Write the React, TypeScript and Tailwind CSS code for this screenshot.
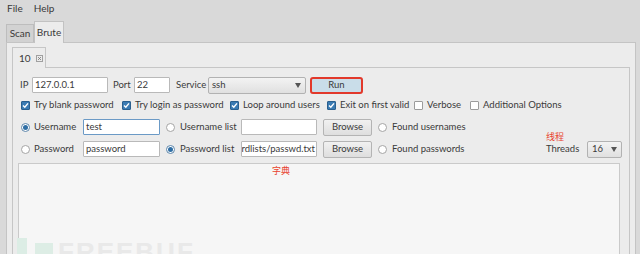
import React from "react";

const font = "font-['Lato',sans-serif]";

function Check({ on }: { on: boolean }) {
  return on ? (
    <span className="flex h-[9px] w-[9px] shrink-0 items-center justify-center rounded-[1px] border border-[#2a5f8e] bg-[#3b7bb3]">
      <svg width="7" height="7" viewBox="0 0 7 7">
        <path d="M1 3.6 L2.8 5.3 L6 1.4" fill="none" stroke="#ffffff" strokeWidth="1.4" />
      </svg>
    </span>
  ) : (
    <span className="h-[9px] w-[9px] shrink-0 rounded-[1px] border border-[#9c9c9c] bg-white" />
  );
}

function Radio({ on }: { on: boolean }) {
  return on ? (
    <span className="flex h-[9px] w-[9px] shrink-0 items-center justify-center rounded-full border border-[#5d86ab] bg-white">
      <span className="h-[5px] w-[5px] rounded-full bg-[#2f6ea4]" />
    </span>
  ) : (
    <span className="h-[9px] w-[9px] shrink-0 rounded-full border border-[#a5a5a5] bg-white" />
  );
}

function Arrow() {
  return (
    <svg width="6" height="5" viewBox="0 0 6 5">
      <path d="M0 0 L6 0 L3 5 Z" fill="#555555" />
    </svg>
  );
}

function Field({ w, text, focus }: { w: string; text: string; focus?: boolean }) {
  return (
    <div
      className={`flex h-[16px] shrink-0 items-center overflow-hidden whitespace-nowrap rounded-[1px] border bg-white pl-[2px] ${w} ${
        focus ? "border-[#6b9ac6]" : "border-[#b9b9b9]"
      }`}
    >
      {text}
    </div>
  );
}

function Browse() {
  return (
    <div className="flex h-[17px] w-[49px] items-center justify-center rounded-[2px] border border-[#b4b4b4] bg-gradient-to-b from-[#f1f1f1] to-[#dedede]">
      Browse
    </div>
  );
}

const boxes: { label: string; on: boolean; w: string }[] = [
  { label: "Try blank password", on: true, w: "w-[101px]" },
  { label: "Try login as password", on: true, w: "w-[108px]" },
  { label: "Loop around users", on: true, w: "w-[97px]" },
  { label: "Exit on first valid", on: true, w: "w-[87px]" },
  { label: "Verbose", on: false, w: "w-[56px]" },
  { label: "Additional Options", on: false, w: "" },
];

export default function App() {
  return (
    <div className={`relative h-[254px] w-[640px] overflow-hidden whitespace-nowrap bg-[#d9d9d9] text-[9.5px] text-[#3a3a3a] ${font}`}>
      {/* menu */}
      <div className="flex h-[16px] items-center gap-[11px] pl-[7px] text-[10px]">
        <span>File</span>
        <span>Help</span>
      </div>

      {/* top tabs */}
      <div className="flex h-[26px] items-end pl-[6px] text-[10px]">
        <div className="flex h-[18px] w-[28px] items-center justify-center border border-b-0 border-[#bdbdbd] bg-[#d2d2d2]">
          Scan
        </div>
        <div className="-mb-px flex h-[22px] w-[30px] items-center justify-center border border-b-0 border-[#c2c2c2] bg-[#ececec]">
          Brute
        </div>
      </div>

      {/* outer pane */}
      <div className="ml-[6px] h-[220px] w-[630px] border border-b-0 border-[#c4c4c4] bg-[#ececec] pl-[5px] pt-[4px]">
        <div className="flex text-[10px]">
          <div className="-mb-px flex h-[21px] w-[34px] items-center gap-[5px] border border-b-0 border-[#c6c6c6] bg-[#ececec] pl-[6px]">
            <span>10</span>
            <span className="flex h-[7px] w-[7px] items-center justify-center border border-[#a0a0a0]">
              <svg width="3" height="3" viewBox="0 0 3 3">
                <path d="M0 0 L3 3 M3 0 L0 3" stroke="#777777" strokeWidth="0.8" />
              </svg>
            </span>
          </div>
        </div>

        {/* inner pane */}
        <div className="h-[200px] w-[618px] border border-b-0 border-[#c6c6c6] pl-[5px] pr-[8px] pt-[8px]">
          {/* row 1 */}
          <div className="flex h-[18px] items-center pl-[2px]">
            <span className="w-[12px]">IP</span>
            <Field w="w-[76px]" text="127.0.0.1" />
            <span className="ml-[5px] w-[21px]">Port</span>
            <Field w="w-[36px]" text="22" />
            <span className="ml-[6px] w-[32px]">Service</span>
            <div className="flex h-[17px] w-[98px] items-center justify-between rounded-[2px] border border-[#b2b2b2] bg-gradient-to-b from-[#f3f3f3] to-[#e0e0e0] pl-[3px] pr-[4px]">
              <span>ssh</span>
              <Arrow />
            </div>
            <div className="ml-[4px] flex h-[17px] w-[53px] items-center justify-center rounded-[3px] border-2 border-[#e2392b] bg-[#c9dde9]">
              Run
            </div>
          </div>

          {/* row 2 */}
          <div className="mt-[4px] flex h-[14px] items-center pl-[3px]">
            {boxes.map((b) => (
              <div key={b.label} className={`flex shrink-0 items-center gap-[4px] ${b.w}`}>
                <Check on={b.on} />
                <span>{b.label}</span>
              </div>
            ))}
          </div>

          {/* row 3 */}
          <div className="mt-[7px] flex h-[16px] items-center pl-[3px]">
            <div className="flex w-[62px] shrink-0 items-center gap-[4px]">
              <Radio on={true} />
              <span>Username</span>
            </div>
            <Field w="w-[77px]" text="test" focus />
            <div className="ml-[6px] flex w-[75px] shrink-0 items-center gap-[5px]">
              <Radio on={false} />
              <span>Username list</span>
            </div>
            <Field w="w-[76px]" text="" />
            <div className="ml-[6px]">
              <Browse />
            </div>
            <div className="ml-[6px] flex items-center gap-[5px]">
              <Radio on={false} />
              <span>Found usernames</span>
            </div>
          </div>

          {/* row 4 */}
          <div className="mt-[6px] flex h-[16px] items-center pl-[3px]">
            <div className="flex w-[62px] shrink-0 items-center gap-[4px]">
              <Radio on={false} />
              <span>Password</span>
            </div>
            <Field w="w-[77px]" text="password" />
            <div className="ml-[6px] flex w-[75px] shrink-0 items-center gap-[5px]">
              <Radio on={true} />
              <span>Password list</span>
            </div>
            <div className="flex h-[16px] w-[76px] shrink-0 items-center justify-end overflow-hidden rounded-[1px] border border-[#b9b9b9] bg-white pr-[1px]">
              ordlists/passwd.txt
            </div>
            <div className="ml-[6px]">
              <Browse />
            </div>
            <div className="ml-[6px] flex w-[168px] shrink-0 items-center gap-[5px]">
              <Radio on={false} />
              <span>Found passwords</span>
            </div>
            <span className="w-[41px] shrink-0">Threads</span>
            <div className="flex h-[17px] w-[35px] shrink-0 items-center justify-between rounded-[2px] border border-[#b2b2b2] bg-gradient-to-b from-[#f3f3f3] to-[#e0e0e0] pl-[4px] pr-[4px]">
              <span>16</span>
              <Arrow />
            </div>
          </div>

          {/* output area */}
          <div className="mt-[6px] h-[100px] w-[602px] border border-b-0 border-[#cacaca] bg-[#f6f6f6]" />
        </div>
      </div>

      {/* annotations */}
      <span className="absolute left-[546px] top-[132px] font-['Noto_Sans_CJK_SC',sans-serif] text-[9px] leading-none text-[#e8442e]">线程</span>
      <span className="absolute left-[272px] top-[166px] font-['Noto_Sans_CJK_SC',sans-serif] text-[9px] leading-none text-[#e8442e]">字典</span>

      {/* watermark */}
      <div className="absolute left-[17px] top-[238px] h-[20px] w-[10px] bg-[#dcede5]" />
      <div className="absolute left-[35px] top-[243px] h-[20px] w-[18px] bg-[#ddede5]" />
      <span className="absolute left-[58px] top-[239px] font-['Liberation_Sans',sans-serif] text-[26px] font-bold leading-none tracking-[2px] text-[#e9e9e9]">
        FREEBUF
      </span>
    </div>
  );
}
